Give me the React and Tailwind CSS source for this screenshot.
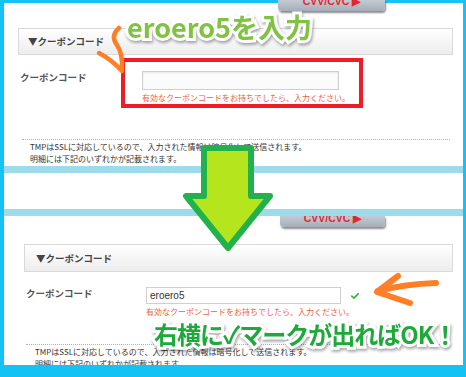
export default function App() {
  const jp = "font-['Noto_Sans_CJK_JP',sans-serif]";
  return (
    <div className={`relative w-[466px] h-[377px] overflow-hidden bg-[#14c2f3] pl-[4px] pt-[3px] pr-[3px] pb-[12px] ${jp}`}>
      <div className="flex h-full flex-col bg-white">
        {/* top screenshot */}
        <div className="h-[163px] overflow-hidden flex flex-col">
          <div className="mt-[25px] ml-[14px] w-[435px] h-[27px] border border-[#d9d9d9] bg-linear-to-b from-white to-[#ededed] flex items-center pl-[9px] text-[9.5px] font-bold text-[#444]">
            ▼クーポンコード
          </div>
          <div className="mt-[16px] ml-[16px] flex">
            <div className="w-[122px] text-[9.5px] font-bold text-[#555] leading-[10px] pt-[1px]">クーポンコード</div>
            <div className="flex flex-col">
              <div className="w-[197px] h-[19px] border border-[#cfcfcf] bg-[#fbfbfb] shadow-[inset_0_1px_2px_rgba(0,0,0,0.08)]" />
              <div className="mt-[3px] text-[8px] leading-[10px] text-[#f0603c] whitespace-nowrap">有効なクーポンコードをお持ちでしたら、入力ください。</div>
            </div>
          </div>
          <div className="mt-[36px] ml-[18px] w-[428px] border-t border-dotted border-[#a9a9ef]" />
          <div className="ml-[26px] mt-[1px] text-[8px] leading-[12px] text-[#333] whitespace-nowrap">
            <div>TMPはSSLに対応しているので、入力された情報は暗号化して送信されます。</div>
            <div>明細には下記のいずれかが記載されます。</div>
          </div>
        </div>
        <div className="h-[7px] bg-[#9ddbea]" />
        <div className="h-[36px]" />
        <div className="h-[7px] bg-[#9ddbea]" />
        {/* bottom screenshot */}
        <div className="flex-1 overflow-hidden flex flex-col">
          <div className="ml-[276px] w-[105px] h-[11px] shrink-0 rounded-b-[4px] bg-linear-to-b from-[#c3cad2] to-[#a5aeb8] shadow-[1px_2px_2px_rgba(0,0,0,0.45)] overflow-hidden flex items-start justify-center">
            <span className="-mt-[4px] text-[10.5px] leading-[12px] font-bold text-[#e8242c] font-['Liberation_Sans',sans-serif]">CVV/CVC ▶</span>
          </div>
          <div className="mt-[17px] ml-[20px] w-[429px] h-[28px] shrink-0 border border-[#d9d9d9] bg-linear-to-b from-white to-[#ededed] flex items-center pl-[11px] text-[9.5px] font-bold text-[#444]">
            ▼クーポンコード
          </div>
          <div className="mt-[15px] ml-[22px] flex shrink-0">
            <div className="w-[120px] text-[9.5px] font-bold text-[#555] leading-[10px] pt-[1px]">クーポンコード</div>
            <div className="flex flex-col">
              <div className="flex items-start">
                <div className="w-[195px] h-[17px] border border-[#cfcfcf] bg-white flex items-center pl-[3px] text-[10px] text-[#333] font-['Liberation_Sans',sans-serif]">eroero5</div>
                <svg className="ml-[10px] mt-[6px]" width="8" height="6" viewBox="0 0 8 6">
                  <path d="M0.8 3.2 L3 5.2 L7.4 0.6" fill="none" stroke="#3fb44a" strokeWidth="1.8" strokeLinecap="round" strokeLinejoin="round" />
                </svg>
              </div>
              <div className="mt-[3px] text-[8px] leading-[10px] text-[#f0603c] whitespace-nowrap">有効なクーポンコードをお持ちでしたら、入力ください。</div>
            </div>
          </div>
          <div className="mt-[27px] ml-[22px] w-[424px] shrink-0 border-t border-dotted border-[#a9a9ef]" />
          <div className="ml-[31px] mt-[1px] text-[8px] leading-[12px] text-[#333] whitespace-nowrap">
            <div>TMPはSSLに対応しているので、入力された情報は暗号化して送信されます。</div>
            <div>明細には下記のいずれかが記載されます。</div>
          </div>
        </div>
      </div>

      {/* top CVV button peeking over border */}
      <div className="absolute left-[278px] top-0 w-[107px] h-[11px] rounded-b-[4px] bg-linear-to-b from-[#c3cad2] to-[#a5aeb8] shadow-[1px_2px_2px_rgba(0,0,0,0.45)] overflow-hidden flex items-start justify-center">
        <span className="-mt-[5px] text-[10.5px] leading-[12px] font-bold text-[#e8242c] font-['Liberation_Sans',sans-serif]">CVV/CVC ▶</span>
      </div>

      {/* red highlight box */}
      <div className="absolute left-[121px] top-[58px] w-[242px] h-[50px] border-[4px] border-[#ee1c25]" />

      {/* arrows */}
      <svg className="absolute left-0 top-0 pointer-events-none" width="466" height="377" viewBox="0 0 466 377">
        <polygon points="204,148 251,148 251,196 270,196 228,248 186,196 204,196" fill="#b5e61d" stroke="#22b14c" strokeWidth="6" strokeLinejoin="round" />
        <path d="M119 28 Q110 36 117 45 Q123 54 122 70" fill="none" stroke="#ff7f27" strokeWidth="4.5" strokeLinecap="round" />
        <path d="M99 53 Q112 60 122 71" fill="none" stroke="#ff7f27" strokeWidth="4.5" strokeLinecap="round" />
        <path d="M398 276 L377 292 L410 303" fill="none" stroke="#ff7f27" strokeWidth="6" strokeLinecap="round" strokeLinejoin="round" />
        <path d="M378 291 Q405 284 436 283" fill="none" stroke="#ff7f27" strokeWidth="6" strokeLinecap="round" />
      </svg>

      {/* annotation texts */}
      <div className="absolute left-[127px] top-[12px] text-[27px] leading-[30px] font-bold text-[#80c342] whitespace-nowrap [-webkit-text-stroke:6px_#fff] [paint-order:stroke_fill] drop-shadow-[1px_2px_1.5px_rgba(0,0,0,0.35)]">
        eroero5を入力
      </div>
      <div className="absolute left-[154px] top-[319px] text-[24px] leading-[30px] font-bold text-[#1ea93b] whitespace-nowrap tracking-[-1px] [-webkit-text-stroke:6px_#fff] [paint-order:stroke_fill] drop-shadow-[1px_2px_1.5px_rgba(0,0,0,0.35)]">
        右横に✓マークが出ればOK！
      </div>
    </div>
  );
}
